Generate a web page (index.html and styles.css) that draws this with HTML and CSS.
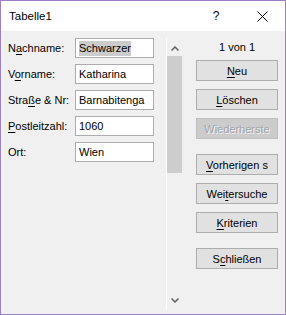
FILE: index.html
```html
<!DOCTYPE html>
<html lang="de">

<head>
    <meta charset="UTF-8">
    <title>Tabelle1</title>
    <link rel="stylesheet" href="styles.css">
</head>

<body>
    <div class="window">
        <div class="titlebar">
            <div class="title">Tabelle1</div>
            <div class="help">?</div>
            <div class="close">
                <svg width="11" height="11" viewBox="0 0 11 11">
                    <path d="M0.5 0.5 L10.5 10.5 M10.5 0.5 L0.5 10.5" stroke="#000" stroke-width="1" fill="none" />
                </svg>
            </div>
        </div>

        <div class="main">
            <div class="form">
                <label>N<u>a</u>chname:</label>
                <div class="field"><span class="selected">Schwarzer</span></div>
                <label>V<u>o</u>rname:</label>
                <div class="field">Katharina</div>
                <label>Stra<u>ß</u>e &amp; Nr:</label>
                <div class="field">Barnabitenga</div>
                <label><u>P</u>ostleitzahl:</label>
                <div class="field">1060</div>
                <label>Ort:</label>
                <div class="field">Wien</div>
            </div>

            <div class="scrollbar">
                <div class="arrow up">
                    <svg width="8" height="5" viewBox="0 0 8 5">
                        <path d="M0.5 4.5 L4 1 L7.5 4.5" stroke="#606060" stroke-width="1.5" fill="none" />
                    </svg>
                </div>
                <div class="thumb"></div>
                <div class="track"></div>
                <div class="arrow">
                    <svg width="8" height="5" viewBox="0 0 8 5">
                        <path d="M0.5 0.5 L4 4 L7.5 0.5" stroke="#606060" stroke-width="1.5" fill="none" />
                    </svg>
                </div>
            </div>

            <div class="actions">
                <div class="counter">1 von 1</div>
                <button><u>N</u>eu</button>
                <button><u>L</u>öschen</button>
                <button class="disabled">Wiederherste</button>
                <button class="gap"><u>V</u>orherigen s</button>
                <button>Wei<u>t</u>ersuche</button>
                <button><u>K</u>riterien</button>
                <button class="gap">S<u>c</u>hließen</button>
            </div>
        </div>
    </div>
</body>

</html>
```

FILE: styles.css
```css
body {
    margin: 0;
    font-family: 'Liberation Sans', Arial, sans-serif;
    font-size: 11px;
    color: #000;
}

.window {
    width: 286px;
    height: 315px;
    box-sizing: border-box;
    border: 1px solid #9b80c6;
    background-color: #f0f0f0;
    display: flex;
    flex-direction: column;
}

.titlebar {
    height: 30px;
    background-color: #fff;
    display: flex;
    align-items: center;
}

.title {
    flex: 1;
    padding-left: 8px;
    font-size: 11.5px;
}

.help,
.close {
    width: 46px;
    height: 30px;
    display: flex;
    align-items: center;
    justify-content: center;
}

.help {
    font-size: 12px;
}

.main {
    flex: 1;
    display: flex;
}

.form {
    width: 157px;
    padding: 7px 0 0 7px;
    display: grid;
    grid-template-columns: 67px 79px;
    grid-auto-rows: 20px;
    row-gap: 6px;
    align-content: start;
    align-items: center;
}

.form u,
.actions u {
    text-decoration-thickness: 1px;
    text-underline-offset: 2px;
}

.field {
    height: 20px;
    box-sizing: border-box;
    border: 1px solid #adadad;
    background-color: #fff;
    padding: 0 3px;
    line-height: 18px;
    white-space: nowrap;
    overflow: hidden;
}

.selected {
    background-color: #cccccc;
    padding: 1px 0 2px;
}

.scrollbar {
    width: 16px;
    height: 271px;
    margin-top: 7px;
    margin-left: 1px;
    border-left: 1px solid #fff;
    display: flex;
    flex-direction: column;
}

.arrow {
    height: 18px;
    display: flex;
    align-items: center;
    justify-content: center;
}

.arrow.up {
    padding-top: 3px;
    height: 15px;
}

.thumb {
    height: 117px;
    width: 15px;
    background-color: #cdcdcd;
}

.track {
    flex: 1;
}

.actions {
    flex: 1;
    padding: 9px 0 0 13px;
    display: flex;
    flex-direction: column;
}

.counter {
    width: 82px;
    height: 14px;
    line-height: 14px;
    text-align: center;
    margin-bottom: 6px;
}

.actions button {
    width: 82px;
    height: 21px;
    box-sizing: border-box;
    border: 1px solid #adadad;
    background-color: #e1e1e1;
    font-family: 'Liberation Sans', Arial, sans-serif;
    font-size: 11px;
    color: #000;
    padding: 0;
    margin: 0 0 8px;
    white-space: nowrap;
    overflow: hidden;
}

.actions button.disabled {
    background-color: #cccccc;
    border-color: #bfbfbf;
    color: #a3a3a3;
    text-shadow: 1px 1px 0 #f4f4f4;
}

.actions button.gap {
    margin-top: 7px;
}
```
